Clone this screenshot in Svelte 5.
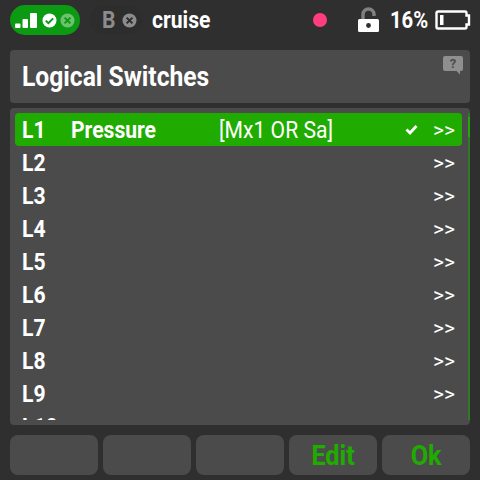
<script lang="ts">
	// Logical switches list page on the radio screen
	const rows = ['L1', 'L2', 'L3', 'L4', 'L5', 'L6', 'L7', 'L8', 'L9', 'L10'];
	const softkeys = ['', '', '', 'Edit', 'Ok'];
</script>

<div class="screen">
	<header class="status">
		<div class="link-pill">
			<svg class="bars" width="22" height="15" viewBox="0 0 22 15" aria-hidden="true">
				<rect x="0" y="10.500" width="5.500" height="4.500" rx="1" fill="#fff" />
				<rect x="7.500" y="6" width="5.500" height="9" rx="1" fill="#fff" />
				<rect x="15" y="0" width="7" height="15" rx="1" fill="#fff" />
			</svg>
			<svg width="15" height="15" viewBox="0 0 15 15" aria-hidden="true">
				<circle cx="7.500" cy="7.500" r="7" fill="#fff" />
				<path d="M3.800 7.600 6.400 10.200 11.200 5.400" fill="none" stroke="#0b9a12" stroke-width="2" />
			</svg>
			<svg width="15" height="15" viewBox="0 0 15 15" aria-hidden="true">
				<circle cx="7.500" cy="7.500" r="7" fill="#6cc26f" />
				<path d="M4.600 4.600 10.400 10.400M10.400 4.600 4.600 10.400" stroke="#0b9a12" stroke-width="2" />
			</svg>
		</div>
		<div class="module">
			<span class="cond module-name">B</span>
			<svg width="15" height="15" viewBox="0 0 15 15" aria-hidden="true">
				<circle cx="7.500" cy="7.500" r="7" fill="#8c8c8c" />
				<path d="M4.600 4.600 10.400 10.400M10.400 4.600 4.600 10.400" stroke="#2d2d2d" stroke-width="2" />
			</svg>
		</div>
		<span class="cond model">cruise</span>
		<span class="spacer"></span>
		<span class="rec-dot"></span>
		<svg class="lock" width="22" height="25" viewBox="0 0 22 25" aria-hidden="true">
			<path d="M5 12V7.500C5 4 7.500 2 10.500 2S16 4 16 7.500V9" fill="none" stroke="#808080" stroke-width="3.400" />
			<rect x="0" y="12" width="21" height="13" rx="1.500" fill="#fff" />
			<circle cx="10.500" cy="18.500" r="2.400" fill="#2f2f2f" />
		</svg>
		<span class="cond battery-text">16%</span>
		<svg class="battery" width="36" height="20" viewBox="0 0 36 20" aria-hidden="true">
			<path d="M3 1.500H30a1.500 1.500 0 0 1 1.500 1.500V5.500H34V14.500H31.500V17a1.500 1.500 0 0 1-1.500 1.500H3A1.500 1.500 0 0 1 1.500 17V3A1.500 1.500 0 0 1 3 1.500Z" fill="none" stroke="#fff" stroke-width="2.400" />
			<rect x="5" y="5" width="3.500" height="10" fill="#fff" />
		</svg>
	</header>

	<section class="title">
		<h1 class="cond">Logical Switches</h1>
		<svg class="help" width="20" height="19" viewBox="0 0 20 19" aria-hidden="true">
			<path d="M2 0H18a2 2 0 0 1 2 2V13a2 2 0 0 1-2 2H17V18.500L13.500 15H2a2 2 0 0 1-2-2V2A2 2 0 0 1 2 0Z" fill="#8f8f8f" />
			<text x="10" y="12" text-anchor="middle" class="help-mark">?</text>
		</svg>
	</section>

	<section class="list">
		<div class="scroll"><div class="thumb"></div></div>
		<div class="viewport">
			{#each rows as id, i (id)}
				<div class="row" class:active={i === 0}>
					<span class="cond id">{id}</span>
					{#if i === 0}
						<span class="cond name">Pressure</span>
						<span class="cond formula">[Mx1 OR Sa]</span>
						<svg class="tick" width="13" height="11" viewBox="0 0 13 11" aria-hidden="true">
							<path d="M1.500 5.500 5 9 11.500 2" fill="none" stroke="#fff" stroke-width="2.800" />
						</svg>
					{/if}
					<span class="more">&gt;&gt;</span>
				</div>
			{/each}
		</div>
	</section>

	<footer class="keys">
		{#each softkeys as key}
			<div class="key"><span class="cond">{key}</span></div>
		{/each}
	</footer>
</div>

<style>
	:global(body) {
		margin: 0;
		background: #2f2f2f;
	}
	.screen {
		width: 480px;
		height: 480px;
		box-sizing: border-box;
		padding: 5px 10px;
		display: flex;
		flex-direction: column;
		background: #2f2f2f;
		color: #fff;
		font-family: 'Roboto', sans-serif;
		font-weight: 700;
		overflow: hidden;
	}
	.cond {
		display: inline-block;
		transform: scaleX(0.88);
		transform-origin: left center;
		white-space: nowrap;
	}
	.status {
		height: 30px;
		flex: none;
		display: flex;
		align-items: center;
	}
	.link-pill {
		width: 70px;
		height: 30px;
		box-sizing: border-box;
		padding-left: 5px;
		border-radius: 15px;
		background: #0b9a12;
		display: flex;
		align-items: center;
		gap: 3px;
	}
	.bars {
		margin-right: 2px;
	}
	.module {
		margin-left: 10px;
		margin-right: 10px;
		width: 52px;
		height: 30px;
		box-sizing: border-box;
		padding-left: 12px;
		border-radius: 15px;
		background: #2d2d2d;
		display: flex;
		align-items: center;
	}
	.module-name {
		font-size: 24px;
		color: #8c8c8c;
		width: 20px;
		flex: none;
	}
	.model {
		font-size: 24px;
	}
	.spacer {
		flex: 1;
	}
	.rec-dot {
		width: 14px;
		height: 14px;
		border-radius: 50%;
		background: #ff3d7f;
		margin-right: 31px;
	}
	.lock {
		margin-top: -2px;
		margin-right: 10px;
	}
	.battery-text {
		font-size: 23px;
		width: 45px;
	}
	.battery {
		margin-right: -1px;
	}
	.title {
		margin-top: 15px;
		height: 53px;
		flex: none;
		box-sizing: border-box;
		padding: 0 12px;
		border-radius: 4px;
		background: #4b4b4b;
		display: flex;
		align-items: center;
		justify-content: space-between;
	}
	h1 {
		margin: 0;
		font-size: 28px;
		line-height: 1;
	}
	.help {
		align-self: flex-start;
		margin: 6px -5px 0 0;
	}
	.help-mark {
		font-size: 13px;
		font-weight: 700;
		fill: #4b4b4b;
	}
	.list {
		position: relative;
		margin-top: 5px;
		height: 317px;
		flex: none;
		box-sizing: border-box;
		padding: 5px 0 5px 5px;
		border-radius: 4px;
		background: #4b4b4b;
	}
	.scroll {
		position: absolute;
		right: 0;
		top: 5px;
		bottom: 5px;
		width: 2px;
		background: #2e7a26;
	}
	.thumb {
		margin-top: 4px;
		height: 20px;
		background: #20ab00;
	}
	.viewport {
		height: 100%;
		width: 447px;
		overflow: hidden;
	}
	.row {
		height: 33px;
		box-sizing: border-box;
		padding: 0 7px;
		border-radius: 4px;
		display: flex;
		align-items: center;
		font-size: 24px;
	}
	.row.active {
		background: #20ab00;
	}
	.id {
		width: 49px;
		flex: none;
	}
	.name {
		width: 148px;
		flex: none;
	}
	.formula {
		font-weight: 400;
		width: 186px;
		flex: none;
	}
	.tick {
		flex: none;
	}
	.more {
		margin-left: auto;
		font-size: 21px;
		font-weight: 400;
	}
	.keys {
		margin-top: 10px;
		height: 40px;
		flex: none;
		display: grid;
		grid-template-columns: repeat(5, 88px);
		gap: 5px;
	}
	.key {
		border-radius: 8px;
		background: #4b4b4b;
		color: #20ab00;
		font-size: 28px;
		display: flex;
		align-items: center;
		justify-content: center;
	}
	.key .cond {
		transform: scaleX(0.9);
		transform-origin: center;
	}
</style>
